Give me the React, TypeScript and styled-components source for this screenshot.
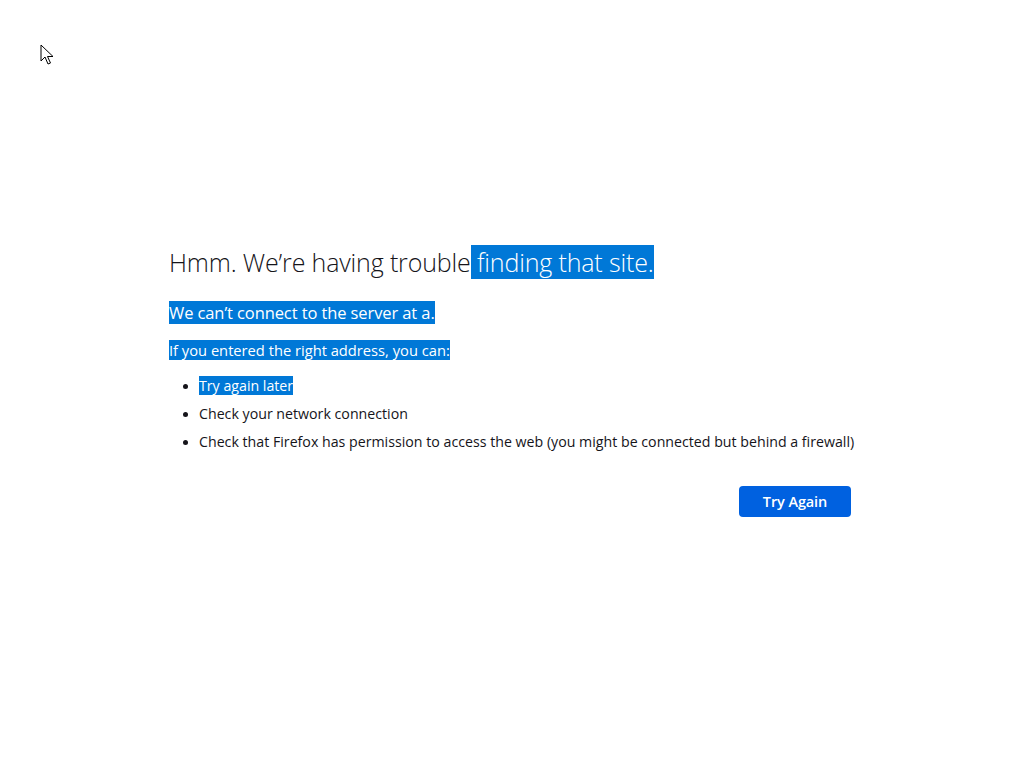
import React from "react";
import styled, { createGlobalStyle } from "styled-components";

const Global = createGlobalStyle`
  html, body { margin: 0; padding: 0; background: #ffffff; }
  body { font-family: "Open Sans", "Noto Sans", sans-serif; color: #15141a; }
`;

const Page = styled.main`
  position: relative;
  min-height: 768px;
  padding-top: 245px;
  box-sizing: border-box;
`;

const Container = styled.div`
  width: 686px;
  margin: 0 auto;
  padding-right: 4px;
  box-sizing: border-box;
`;

const Title = styled.h1`
  margin: 0 0 23px 0;
  font-family: "Open Sans", sans-serif;
  font-weight: 300;
  font-size: 25px;
  line-height: 34px;
  color: #15141a;
  letter-spacing: -0.15px;
`;

const Sel = styled.span`
  background: #0078d7;
  color: #ffffff;
`;

const Lead = styled.p`
  margin: 0 0 18px 0;
  font-size: 16.5px;
  line-height: 21px;
  letter-spacing: -0.1px;
`;

const Intro = styled.p`
  margin: 0 0 16px 0;
  font-size: 14.7px;
  line-height: 19px;
  letter-spacing: 0;
`;

const List = styled.ul`
  margin: 0;
  padding: 0 0 0 30px;
`;

const Item = styled.li`
  font-size: 14.2px;
  line-height: 19px;
  margin-bottom: 9px;
  letter-spacing: 0;
  white-space: nowrap;
  &::marker { font-size: 13px; }
`;

const Actions = styled.div`
  display: flex;
  justify-content: flex-end;
  margin-top: 35px;
`;

const Button = styled.button`
  width: 112px;
  height: 31px;
  border: none;
  border-radius: 4px;
  background: #0061e0;
  color: #ffffff;
  font-family: "Open Sans", sans-serif;
  font-weight: 600;
  font-size: 14.5px;
  letter-spacing: -0.1px;
  cursor: pointer;
`;

const Cursor = styled.svg`
  position: absolute;
  left: 40px;
  top: 44px;
`;

export default function App() {
  return (
    <>
      <Global />
      <Page>
        <Cursor width="16" height="22" viewBox="0 0 16 22">
          <path d="M1 1 L1 17 L5 13 L8 20 L10.5 19 L7.5 12.5 L13 12.5 Z" fill="#ffffff" stroke="#000000" strokeWidth="1" strokeLinejoin="round" />
        </Cursor>
        <Container>
          <Title>
            Hmm. We’re having trouble<Sel> finding that site.</Sel>
          </Title>
          <Lead>
            <Sel>We can’t connect to the server at a.</Sel>
          </Lead>
          <Intro>
            <Sel>If you entered the right address, you can:</Sel>
          </Intro>
          <List>
            <Item>
              <Sel>Try again later</Sel>
            </Item>
            <Item>Check your network connection</Item>
            <Item>Check that Firefox has permission to access the web (you might be connected but behind a firewall)</Item>
          </List>
          <Actions>
            <Button>Try Again</Button>
          </Actions>
        </Container>
      </Page>
    </>
  );
}
